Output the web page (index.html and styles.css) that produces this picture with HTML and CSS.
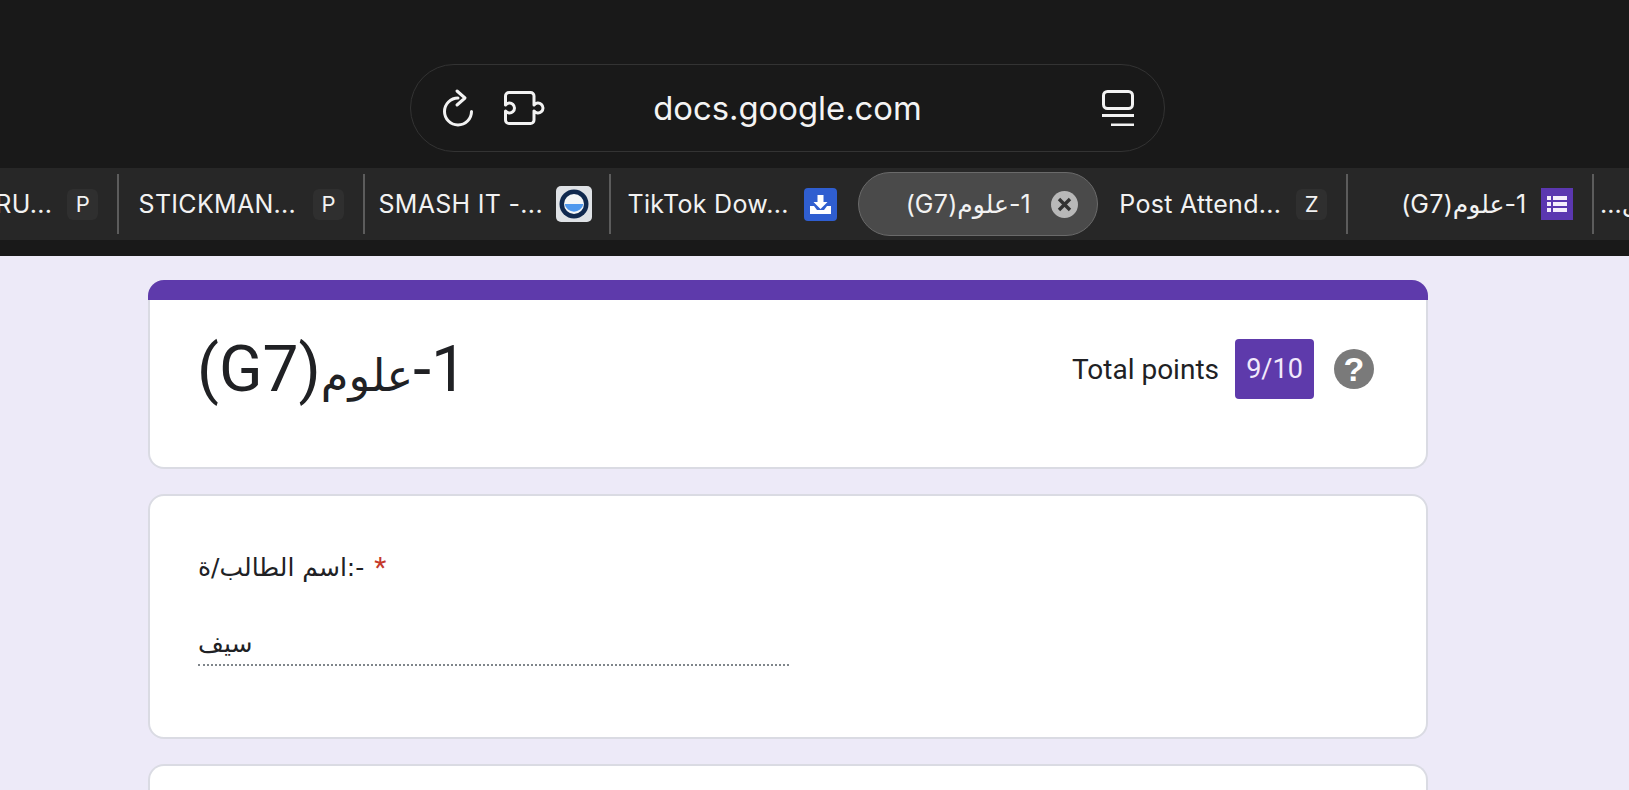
FILE: index.html
```html
<!DOCTYPE html>
<html lang="en">
<head>
<meta charset="utf-8">
<title>Form</title>
<link rel="stylesheet" href="styles.css">
</head>
<body>
<header class="chrome">
  <div class="url-pill">
    <div class="url-left">
      <svg class="ic-refresh" viewBox="0 0 34 40" width="34" height="40"><path d="M17 10A13.5 13.5 0 1 0 30.5 23.5"/><path d="M16 3l8 7-8 7"/></svg>
      <svg class="ic-puzzle" viewBox="0 0 42 34" width="42" height="34"><path d="M5 1.5H26.5a3.5 3.5 0 0 1 3.5 3.5V14a5 5 0 1 1 0 6V29a3.5 3.5 0 0 1-3.5 3.5H5A3.5 3.5 0 0 1 1.5 29V20a5 5 0 1 0 0-6V5A3.5 3.5 0 0 1 5 1.5z"/></svg>
    </div>
    <div class="url-text">docs.google.com</div>
    <div class="url-right">
      <svg class="ic-reader" viewBox="0 0 32 36" width="32" height="36"><rect x="1.5" y="1.5" width="29" height="17" rx="4"/><path d="M0 25.5H32M9 35H32"/></svg>
    </div>
  </div>
</header>
<nav class="tabs">
  <div class="tab sep tab-first"><span class="tab-title">RU...</span><span class="badge">P</span></div>
  <div class="tab sep tab-stick"><span class="tab-title">STICKMAN...</span><span class="badge">P</span></div>
  <div class="tab sep tab-smash"><span class="tab-title">SMASH IT -...</span>
    <svg class="fav" viewBox="0 0 36 36" width="36" height="36"><rect width="36" height="36" rx="5" fill="#dfe2e6"/><circle cx="18" cy="18" r="14.5" fill="#10294f"/><circle cx="18" cy="18" r="10" fill="#f4f6f8"/><path d="M8.6 18h18.8a9.6 9.6 0 0 1-18.8 0z" fill="#4f98ee"/></svg>
  </div>
  <div class="tab tab-tiktok"><span class="tab-title">TikTok Dow...</span>
    <svg class="fav" viewBox="0 0 33 33" width="33" height="33"><rect width="33" height="33" rx="4" fill="#2f5ed0"/><path d="M13.5 7h6v7h4l-7 7-7-7h4z" fill="#fff"/><path d="M6 18h4l3 4h7l3-4h4v8H6z" fill="#fff"/></svg>
  </div>
  <div class="tab tab-active">
    <div class="active-pill">
      <span class="tab-title" dir="rtl">1-<span class="ar">علوم</span>(G7)</span>
      <span class="close"><svg viewBox="0 0 27 27" width="27" height="27"><path d="M8 8l11 11M19 8l-11 11"/></svg></span>
    </div>
  </div>
  <div class="tab sep"><span class="tab-title">Post Attend...</span><span class="badge">Z</span></div>
  <div class="tab sep"><span class="tab-title" dir="rtl">1-<span class="ar">علوم</span>(G7)</span>
    <svg class="fav" viewBox="0 0 32 32" width="32" height="32"><rect width="32" height="32" fill="#5b37b0"/><path d="M6 8h4v4H6zM12 8h14v4H12zM6 14h4v4H6zM12 14h14v4H12zM6 20h4v4H6zM12 20h14v4H12z" fill="#f5eefc"/></svg>
  </div>
  <div class="tab tab-last"><span class="tab-title" dir="rtl">الل...</span></div>
</nav>
<div class="chrome-foot"></div>
<main class="page">
  <section class="card card-head">
    <div class="band"></div>
    <div class="head-row">
      <h1 class="form-title" dir="rtl">1-<span class="ar">علوم</span>(G7)</h1>
      <div class="score">
        <span class="score-label">Total points</span>
        <span class="score-value">9/10</span>
        <span class="help">?</span>
      </div>
    </div>
  </section>
  <section class="card card-q">
    <div class="q-label"><span class="q-text" dir="rtl">-:اسم الطالب/ة</span><span class="star">*</span></div>
    <div class="q-answer" dir="rtl"><span>سيف</span></div>
  </section>
  <section class="card card-next"></section>
</main>
</body>
</html>
```
FILE: styles.css
```css
* { box-sizing: border-box; }
html, body { margin: 0; height: 100%; overflow: hidden; }
body {
  display: flex;
  flex-direction: column;
  background: #edeaf8;
  font-family: Roboto, "DejaVu Sans", sans-serif;
}
.chrome {
  flex: none;
  height: 168px;
  background: #191919;
  padding: 64px 0 0 410px;
}
.url-pill {
  width: 755px;
  height: 88px;
  border: 1.5px solid #333;
  border-radius: 44px;
  display: grid;
  grid-template-columns: 1fr auto 1fr;
  align-items: center;
  color: #f2f2f2;
}
.url-left { display: flex; align-items: center; gap: 29px; padding-left: 30px; }
.url-right { display: flex; justify-content: flex-end; padding-right: 30px; }
.url-text { font: 32.8px Inter, sans-serif; color: #f4f4f4; }
.ic-refresh path, .ic-puzzle path, .ic-reader rect, .ic-reader path {
  fill: none;
  stroke: #f2f2f2;
  stroke-width: 3;
  stroke-linecap: round;
  stroke-linejoin: round;
}
.ic-reader path { stroke-linecap: butt; }
.tabs {
  flex: none;
  height: 72px;
  background: #272727;
  display: flex;
  align-items: center;
  overflow: hidden;
}
.tab {
  flex: 0 0 245.8px;
  min-width: 0;
  height: 60px;
  display: flex;
  align-items: center;
  justify-content: flex-end;
  gap: 15px;
  padding-right: 19px;
  color: #f2f2f2;
}
.tab-first { flex-basis: 119.3px; }
.tab-stick { gap: 17px; }
.tab-smash { padding-right: 17px; gap: 13px; }
.tab-tiktok { padding-right: 20px; }
.sep { border-right: 2px solid #5c5c5c; }
.tab-title {
  font: 25px Inter, "DejaVu Sans", sans-serif;
  letter-spacing: 0.3px;
  white-space: nowrap;
}
.tab-title .ar { letter-spacing: 0; }
.form-title .ar { font-size: 0.7em; }
.badge {
  flex: none;
  width: 31px;
  height: 31px;
  border-radius: 6px;
  background: #2f2f2f;
  display: flex;
  align-items: center;
  justify-content: center;
  font: 22px Inter, sans-serif;
}
.fav { flex: none; }
.tab-active { height: 64px; padding: 0 4px 0 0; justify-content: center; }
.active-pill {
  flex: none;
  width: 240px;
  height: 64px;
  border-radius: 32px;
  background: #4a4a4a;
  border: 1.5px solid #6a6a6a;
  display: flex;
  align-items: center;
  justify-content: flex-end;
  gap: 20px;
  padding-right: 19px;
}
.close {
  width: 27px;
  height: 27px;
  border-radius: 50%;
  background: #b8b8b8;
  display: flex;
}
.close path { stroke: #333; stroke-width: 3.4; fill: none; }
.tab-last { flex: 1; justify-content: flex-start; padding: 0 0 0 6px; overflow: hidden; }
.chrome-foot { flex: none; height: 16px; background: #191919; }
.page {
  flex: 1;
  min-height: 0;
  padding: 24px 0 0 148px;
  display: flex;
  flex-direction: column;
  gap: 25px;
}
.card {
  width: 1280px;
  flex: none;
  background: #fff;
  border: 2px solid #dadbe3;
  border-radius: 16px;
}
.card-head {
  height: 189px;
  border-top: 0;
}
.band {
  height: 20px;
  margin: 0 -2px;
  background: #5e3aab;
  border-radius: 16px 16px 0 0;
}
.head-row {
  display: flex;
  justify-content: space-between;
  align-items: center;
  height: 80px;
  margin: 29px 52px 0 47px;
}
.form-title {
  margin: 0;
  font: 400 64px Roboto, "DejaVu Sans", sans-serif;
  color: #202124;
}
.score { display: flex; align-items: center; }
.score-label { font-size: 28px; color: #202124; margin-right: 16px; }
.score-value {
  width: 79px;
  height: 60px;
  border-radius: 4px;
  background: #5e3aab;
  color: #f1e9fb;
  font-size: 27px;
  display: flex;
  align-items: center;
  justify-content: center;
  margin-right: 20px;
}
.help {
  width: 40px;
  height: 40px;
  border-radius: 50%;
  background: #7a7a7a;
  color: #fff;
  font: 700 34px "Liberation Sans", sans-serif;
  display: flex;
  align-items: center;
  justify-content: center;
}
.card-q {
  height: 245px;
  padding: 50px 48px 0;
}
.q-label { display: flex; align-items: center; height: 42px; color: #202124; gap: 10px; }
.q-text { font: 25px "DejaVu Sans", sans-serif; }
.star { color: #c5392b; font: 28px Roboto, sans-serif; }
.q-answer {
  width: 591px;
  height: 44px;
  margin-top: 34px;
  padding-top: 7px;
  border-bottom: 2px dotted #80868b;
  display: flex;
  justify-content: flex-end;
  font: 25px "DejaVu Sans", sans-serif;
  color: #202124;
}
.card-next {
  flex: 1;
  min-height: 0;
  border-bottom: 0;
  border-radius: 16px 16px 0 0;
}
```
